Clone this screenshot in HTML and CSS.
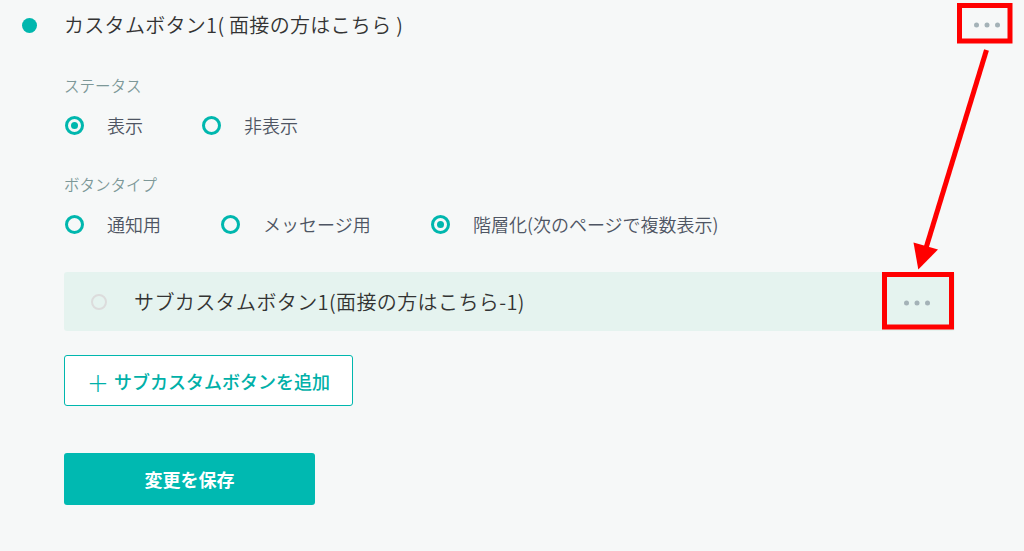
FILE: index.html
```html
<!DOCTYPE html>
<html lang="ja">
<head>
<meta charset="utf-8">
<title>カスタムボタン</title>
<link rel="stylesheet" href="styles.css">
</head>
<body>
<div class="page">
  <header class="head">
    <span class="dot"></span>
    <h1 class="title">カスタムボタン1( 面接の方はこちら )</h1>
    <button class="more" type="button" aria-label="メニュー">
      <svg width="26" height="6" viewBox="0 0 26 6"><circle cx="2.5" cy="3" r="2.5"/><circle cx="13" cy="3" r="2.5"/><circle cx="23.5" cy="3" r="2.5"/></svg>
    </button>
  </header>

  <div class="content">
    <div class="label label-first">ステータス</div>
    <div class="radios">
      <label class="radio w1"><span class="mark on"></span><span class="rtext">表示</span></label>
      <label class="radio"><span class="mark"></span><span class="rtext">非表示</span></label>
    </div>

    <div class="label label-second">ボタンタイプ</div>
    <div class="radios">
      <label class="radio w2"><span class="mark"></span><span class="rtext">通知用</span></label>
      <label class="radio w3"><span class="mark"></span><span class="rtext">メッセージ用</span></label>
      <label class="radio"><span class="mark on"></span><span class="rtext">階層化(次のページで複数表示)</span></label>
    </div>

    <div class="sub-row">
      <span class="sub-mark"></span>
      <span class="sub-text">サブカスタムボタン1(面接の方はこちら-1)</span>
      <button class="more sub-more" type="button" aria-label="メニュー">
        <svg width="26" height="6" viewBox="0 0 26 6"><circle cx="2.5" cy="3" r="2.5"/><circle cx="13" cy="3" r="2.5"/><circle cx="23.5" cy="3" r="2.5"/></svg>
      </button>
    </div>

    <button class="add" type="button"><span class="plus">+</span>サブカスタムボタンを追加</button>

    <button class="save" type="button">変更を保存</button>
  </div>

  <svg class="annot" width="1024" height="551" viewBox="0 0 1024 551">
    <rect x="959.5" y="5.5" width="50.5" height="35.5" fill="none" stroke="#ff0000" stroke-width="5"/>
    <rect x="884.5" y="274.5" width="67" height="52.5" fill="none" stroke="#ff0000" stroke-width="5"/>
    <line x1="986.5" y1="50" x2="926" y2="248" stroke="#ff0000" stroke-width="5"/>
    <polygon points="913.5,242.5 938,249.5 918.3,269.5" fill="#ff0000"/>
  </svg>
</div>
</body>
</html>
```

FILE: styles.css
```css
* { box-sizing: border-box; }

html, body {
  margin: 0;
  padding: 0;
  background: #f6f8f8;
}

body {
  font-family: "Noto Sans CJK JP", "Noto Sans", sans-serif;
  color: #333;
  width: 1024px;
  height: 551px;
  overflow: hidden;
}

.page {
  position: relative;
  width: 1024px;
  height: 551px;
}

.head {
  display: flex;
  align-items: center;
  height: 50px;
  padding-left: 22px;
  padding-right: 24px;
}

.dot {
  width: 15px;
  height: 15px;
  border-radius: 50%;
  background: #00b7ae;
  flex: none;
}

.title {
  margin: 0 0 0 27px;
  font-family: "Noto Sans CJK JP", sans-serif;
  font-weight: 350;
  font-size: 20px;
  letter-spacing: 0.3px;
  line-height: 28px;
  color: #333;
  flex: 1;
}

.more {
  border: 0;
  background: none;
  padding: 0;
  display: flex;
  align-items: center;
  cursor: pointer;
}

.more svg { display: block; fill: #a4b2b7; }

.content {
  padding-left: 64px;
  padding-right: 69px;
  display: flex;
  flex-direction: column;
  align-items: flex-start;
}

.label {
  font-size: 15.5px;
  font-weight: 350;
  line-height: 20px;
  color: #7d9898;
}

.label-first { margin-top: 25px; }
.label-second { margin-top: 37px; }

.radios {
  display: flex;
  align-items: center;
  height: 24px;
  margin-top: 18px;
}

.radio {
  display: flex;
  align-items: center;
  font-size: 18px;
  font-weight: 350;
  line-height: 24px;
  color: #4e5563;
}

.w1 { width: 137px; }
.w2 { width: 156px; }
.w3 { width: 210px; }

.mark {
  width: 19px;
  height: 19px;
  border: 3px solid #00b7ae;
  border-radius: 50%;
  margin-left: 1px;
  margin-right: 23px;
  flex: none;
  display: flex;
  align-items: center;
  justify-content: center;
}

.mark.on::after {
  content: "";
  width: 7px;
  height: 7px;
  border-radius: 50%;
  background: #00b7ae;
}

.sub-row {
  margin-top: 36px;
  align-self: stretch;
  height: 59px;
  background: #e5f3ef;
  border-radius: 3px;
  display: flex;
  align-items: center;
  padding-left: 27px;
  padding-right: 25px;
}

.sub-mark {
  width: 16px;
  height: 16px;
  border: 2px solid #dcdcdc;
  border-radius: 50%;
  flex: none;
}

.sub-text {
  margin-left: 27px;
  font-family: "Noto Sans CJK JP", sans-serif;
  font-size: 20px;
  font-weight: 350;
  letter-spacing: 0.4px;
  line-height: 28px;
  color: #333;
  flex: 1;
}

.sub-more { margin-top: 3px; }

.add {
  margin-top: 24px;
  width: 289px;
  height: 51px;
  border: 1px solid #00b7ae;
  border-radius: 3px;
  background: #fff;
  color: #00b0a8;
  font-family: "Noto Sans CJK JP", sans-serif;
  font-size: 18px;
  font-weight: 500;
  display: flex;
  align-items: center;
  justify-content: center;
  padding: 0;
  cursor: pointer;
}

.plus {
  font-family: "DejaVu Sans", sans-serif;
  font-size: 26px;
  font-weight: 300;
  line-height: 1;
  margin-right: 5px;
  margin-top: 4px;
}

.save {
  margin-top: 47px;
  width: 251px;
  height: 52px;
  border: 0;
  border-radius: 3px;
  background: #00b9b1;
  color: #fff;
  font-family: "Noto Sans CJK JP", sans-serif;
  font-size: 18px;
  font-weight: 700;
  cursor: pointer;
}

.annot {
  position: absolute;
  left: 0;
  top: 0;
  pointer-events: none;
}
```
